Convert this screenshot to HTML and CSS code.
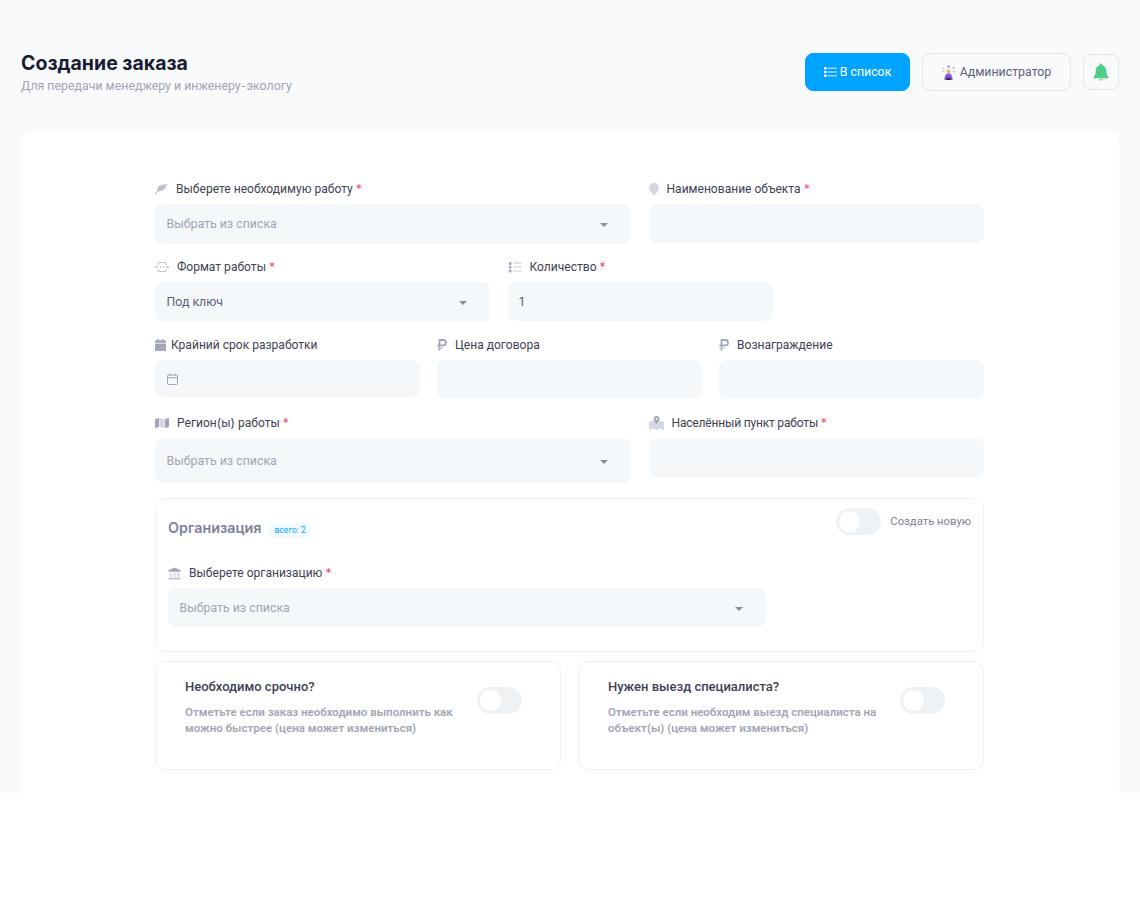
FILE: index.html
```html
<!DOCTYPE html>
<html lang="ru">
  <head>
    <meta charset="UTF-8" />
    <title>Создание заказа</title>
    <link rel="stylesheet" href="styles.css">
  </head>
  <body>
    <div class="page">
      <header class="toolbar">
        <div class="heading">
          <h1>Создание заказа</h1>
          <p>Для передачи менеджеру и инженеру<span class="alt">-</span>экологу</p>
        </div>
        <div class="toolbar-actions">
          <button class="btn btn-primary">
            <svg width="13" height="14" viewBox="0 0 13 14"><g fill="#fff"><rect x="0" y="2" width="2.600" height="2.400" rx=".6"/><rect x="0" y="5.800" width="2.600" height="2.400" rx=".6"/><rect x="0" y="9.600" width="2.600" height="2.400" rx=".6"/></g><g fill="#fff" opacity=".6"><rect x="3.500" y="2.400" width="9.500" height="1.600" rx=".5"/><rect x="3.500" y="6.200" width="9.500" height="1.600" rx=".5"/><rect x="3.500" y="10" width="9.500" height="1.600" rx=".5"/></g></svg>
            В список
          </button>
          <button class="btn btn-user">
            <svg width="15" height="15" viewBox="0 0 15 15"><circle cx="7.500" cy="1.500" r="1.200" fill="#6ea8d8"/><circle cx="2.500" cy="3.500" r="1.100" fill="#e9b7d2"/><circle cx="12.500" cy="3" r="1.100" fill="#b0b4d8"/><rect x="1" y="6" width="2.400" height="1.400" fill="#d6cdf0"/><rect x="11.500" y="6" width="3" height="1.400" fill="#c6d0e8"/><circle cx="7.500" cy="6.200" r="2" fill="#f2b27a"/><path d="M3.400 15c0-4 1.600-6.800 4.100-6.800s4.100 2.800 4.100 6.800z" fill="#8a58cf"/><rect x="5.500" y="12.800" width="4" height="2.200" fill="#2f2a55"/></svg>
            Администратор
          </button>
          <button class="btn btn-bell" aria-label="Уведомления">
            <svg width="16" height="18" viewBox="0 0 16 18"><path d="M8 .6c.7 0 1.200.5 1.200 1.200v.5c2.600.6 4.100 2.800 4.100 5.500 0 3 .7 4.600 2.200 6.200.4.500.1 1.200-.6 1.200H1.100c-.7 0-1-.7-.6-1.200C2 12.400 2.700 10.800 2.700 7.800c0-2.700 1.500-4.900 4.100-5.500v-.5C6.800 1.100 7.300.6 8 .6z" fill="#50cd89"/><rect x="5.800" y="15.800" width="4.400" height="1.800" rx=".9" fill="#50cd89" opacity=".6"/></svg>
          </button>
        </div>
      </header>

      <main class="card">
        <form class="order-form">
          <div class="row">
            <div class="field span-7">
              <label class="field-label">
                <svg class="ico" width="13" height="12" viewBox="0 0 14 12"><path d="M13.500 1C9 .4 4.500 1 3 4.500 2.400 6 2.500 7.400 3 8.400 6.500 9 11 7.500 13.500 1z" fill="#c4c6d2"/><path d="M.6 11.400C2.500 8.200 5 6 8.500 4.200" stroke="#a1a5b7" stroke-width="1" fill="none"/></svg>
                <span>Выберете необходимую работу <em>*</em></span>
              </label>
              <div class="select placeholder">Выбрать из списка</div>
            </div>
            <div class="field span-5">
              <label class="field-label">
                <svg class="ico" width="10" height="14" viewBox="0 0 10 14"><path d="M5 .8c2.700 0 4.800 2 4.800 4.700 0 3-2.600 6.200-4.800 7.900C2.800 11.700.2 8.500.2 5.500.2 2.800 2.300.8 5 .8z" fill="#d5d7e2"/></svg>
                <span>Наименование объекта <em>*</em></span>
              </label>
              <input class="input" type="text">
            </div>
          </div>

          <div class="row">
            <div class="field span-5">
              <label class="field-label">
                <svg class="ico" width="14" height="12" viewBox="0 0 14 12" fill="none" stroke="#c4c6d2" stroke-width="1"><path d="M3 4V1.500h8V4M3 8v2.500h8V8"/><path d="M0 6h3M5 6h1M8 6h1M11 6h3" stroke="#a1a5b7"/></svg>
                <span>Формат работы <em>*</em></span>
              </label>
              <div class="select">Под ключ</div>
            </div>
            <div class="field span-4">
              <label class="field-label">
                <svg class="ico" width="14" height="12" viewBox="0 0 14 12"><g fill="#a1a5b7"><rect x="1" y="1" width="2.400" height="3"/><rect x="1" y="5" width="2.400" height="2.600"/><rect x="1" y="8.800" width="2.400" height="2.600"/></g><g fill="#d5d7e2"><rect x="5" y="1.400" width="8.500" height="1.300"/><rect x="5" y="5.400" width="8.500" height="1.300"/><rect x="5" y="9.400" width="8.500" height="1.300"/></g></svg>
                <span>Количество <em>*</em></span>
              </label>
              <input class="input input-digits" type="text" value="1">
            </div>
          </div>

          <div class="row row-dates">
            <div class="field span-4">
              <label class="field-label label-tight">
                <svg class="ico" width="11" height="12" viewBox="0 0 11 12"><rect x="2.500" y="0" width="1.500" height="2" fill="#a1a5b7"/><rect x="7" y="0" width="1.500" height="2" fill="#a1a5b7"/><rect x="0" y="1.200" width="11" height="2.600" rx=".6" fill="#a1a5b7"/><rect x="0" y="4.400" width="11" height="7.600" rx=".6" fill="#a1a5b7"/></svg>
                <span>Крайний срок разработки</span>
              </label>
              <div class="date-input">
                <svg width="11" height="12" viewBox="0 0 11 12" fill="none" stroke="#a1a5b7" stroke-width="1"><rect x=".5" y="2" width="10" height="9.500" rx="1"/><path d="M.5 4.800h10M3 .5v2.500M8 .5v2.500"/></svg>
              </div>
            </div>
            <div class="field span-4">
              <label class="field-label">
                <svg class="ico" width="10" height="12" viewBox="0 0 10 12" fill="none"><path d="M2.500 11.500V1h3.800a2.700 2.700 0 0 1 0 5.400H.5" stroke="#a1a5b7" stroke-width="1.800"/><path d="M.5 9h5.500" stroke="#c8cad6" stroke-width="1.500"/></svg>
                <span>Цена договора</span>
              </label>
              <input class="input" type="text">
            </div>
            <div class="field span-4">
              <label class="field-label">
                <svg class="ico" width="10" height="12" viewBox="0 0 10 12" fill="none"><path d="M2.500 11.500V1h3.800a2.700 2.700 0 0 1 0 5.400H.5" stroke="#a1a5b7" stroke-width="1.800"/><path d="M.5 9h5.500" stroke="#c8cad6" stroke-width="1.500"/></svg>
                <span>Вознаграждение</span>
              </label>
              <input class="input" type="text">
            </div>
          </div>

          <div class="row row-region">
            <div class="field span-7">
              <label class="field-label">
                <svg class="ico" width="14" height="12" viewBox="0 0 15 12"><path d="M0 2l4.500-1.500v9.500L0 11.500z" fill="#a1a5b7"/><path d="M5.200.5l4.600 1.500v9.500L5.200 10z" fill="#d5d7e2"/><path d="M10.500 2L15 .5V10l-4.500 1.500z" fill="#a1a5b7"/></svg>
                <span>Регион<span class="alt">(</span>ы<span class="alt">)</span> работы <em>*</em></span>
              </label>
              <div class="select select-tall placeholder">Выбрать из списка</div>
            </div>
            <div class="field span-5">
              <label class="field-label">
                <svg class="ico" width="15" height="14" viewBox="0 0 15 14"><path d="M0 6l4-1.500 3.500 1.500L11 4.500 15 6v8l-4-1.500L7.500 14 4 12.500 0 14z" fill="#d5d7e2"/><path d="M7.500 0c1.800 0 3 1.300 3 3 0 1.800-1.700 3.500-3 4.800C6.200 6.500 4.500 4.800 4.500 3c0-1.700 1.200-3 3-3z" fill="#a1a5b7"/><circle cx="7.500" cy="3" r="1" fill="#fff"/></svg>
                <span class="text-narrow">Населённый пункт работы <em>*</em></span>
              </label>
              <input class="input" type="text">
            </div>
          </div>

          <section class="org-box">
            <div class="org-head">
              <div class="org-title">
                <h2>Организация</h2>
                <span class="badge">всего: 2</span>
              </div>
              <div class="switch-wrap">
                <span class="switch"></span>
                <span class="switch-label">Создать новую</span>
              </div>
            </div>
            <div class="row row-last">
              <div class="field span-9">
                <label class="field-label">
                  <svg class="ico" width="13" height="13" viewBox="0 0 14 13"><path d="M7 0l6.500 3v1.500H.5V3z" fill="#a1a5b7"/><g fill="#d5d7e2"><rect x="2" y="5.500" width="2" height="5"/><rect x="6" y="5.500" width="2" height="5"/><rect x="10" y="5.500" width="2" height="5"/></g><rect x=".5" y="11" width="13" height="2" fill="#c4c6d2"/></svg>
                  <span>Выберете организацию <em>*</em></span>
                </label>
                <div class="select select-org placeholder">Выбрать из списка</div>
              </div>
            </div>
          </section>

          <div class="option-grid">
            <div class="option-card">
              <div class="option-text">
                <h3>Необходимо срочно?</h3>
                <p>Отметьте если заказ необходимо выполнить как можно быстрее (цена может измениться)</p>
              </div>
              <span class="switch"></span>
            </div>
            <div class="option-card">
              <div class="option-text">
                <h3>Нужен выезд специалиста?</h3>
                <p>Отметьте если необходим выезд специалиста на объект(ы) (цена может измениться)</p>
              </div>
              <span class="switch"></span>
            </div>
          </div>
        </form>
      </main>
    </div>
  </body>
</html>
```

FILE: styles.css
```css
* {
  box-sizing: border-box;
}
body {
  margin: 0;
  background-color: #fff;
  font-family: Roboto, sans-serif;
  color: #3f4254;
}
.alt {
  font-family: Inter, sans-serif;
}
.page {
  height: 793px;
  overflow: hidden;
  background-color: #f9fafc;
  padding: 53px 21px 0 21px;
}
.toolbar {
  display: flex;
  justify-content: space-between;
  align-items: flex-start;
  margin-bottom: 36px;
}
.heading h1 {
  margin: 0;
  font-family: Inter, sans-serif;
  font-size: 19.5px;
  line-height: 20px;
  font-weight: 700;
  color: #181c32;
}
.heading p {
  margin: 4px 0 0 0;
  font-size: 12.35px;
  line-height: 17px;
  color: #a1a5b7;
}
.toolbar-actions {
  display: flex;
  align-items: center;
  gap: 12px;
}
.btn {
  display: flex;
  align-items: center;
  justify-content: center;
  font-family: Roboto, sans-serif;
  font-size: 12.35px;
  height: 38px;
  border-radius: 8px;
  border: 1px solid #e4e6ef;
  padding: 0;
  background-color: transparent;
}
.btn-primary {
  width: 105px;
  gap: 3px;
  color: #fff;
  background-color: #00a3ff;
  border-color: #00a3ff;
  font-weight: 400;
}
.btn-user {
  width: 149px;
  gap: 4px;
  padding-right: 1px;
  color: #5e6278;
}
.btn-bell {
  width: 36px;
  height: 36px;
}
.card {
  background-color: #fff;
  border-radius: 10px;
  height: 900px;
  padding: 51px 135px 0 134px;
}
.row {
  display: grid;
  grid-template-columns: repeat(12, 1fr);
  column-gap: 17px;
  margin-bottom: 16px;
  align-items: start;
}
.row-dates {
  margin-bottom: 17px;
}
.row-region {
  margin-bottom: 15px;
}
.row-last {
  margin-bottom: 0;
}
.span-4 {
  grid-column: span 4;
}
.span-5 {
  grid-column: span 5;
}
.span-7 {
  grid-column: span 7;
}
.span-9 {
  grid-column: span 9;
}
.field-label {
  display: flex;
  align-items: center;
  gap: 8px;
  height: 14px;
  margin-bottom: 8px;
  font-size: 12.05px;
  line-height: 14px;
  color: #3f4254;
}
.label-tight {
  gap: 5px;
}
.text-narrow {
  letter-spacing: -0.2px;
}
.field-label em {
  font-family: Inter, sans-serif;
  font-style: normal;
  color: #f1416c;
}
.ico {
  flex: none;
}
.select,
.input,
.date-input {
  display: block;
  width: 100%;
  height: 39px;
  border: none;
  outline: none;
  border-radius: 8px;
  background-color: #f5f8fa;
  font-family: Roboto, sans-serif;
  font-size: 12.35px;
  color: #5e6278;
  padding: 0 11.5px;
}
.select {
  display: flex;
  align-items: center;
  position: relative;
  width: calc(100% - 0.6px);
  height: 40px;
}
.select::after {
  content: "";
  position: absolute;
  right: 23px;
  top: 50%;
  margin-top: -1px;
  border-left: 4px solid transparent;
  border-right: 4px solid transparent;
  border-top: 4px solid #8b8e9e;
}
.select-tall {
  height: 45px;
}
.select-org {
  width: 100%;
  height: 39px;
}
.placeholder {
  color: #a1a5b7;
}
.input-digits {
  font-family: Inter, sans-serif;
}
.date-input {
  display: flex;
  align-items: center;
  height: 37px;
}
.org-box {
  border: 1px solid #eff2f5;
  border-radius: 10px;
  padding: 9px 12px 24px 12px;
  height: 154px;
  margin-bottom: 9px;
}
.org-head {
  display: flex;
  justify-content: space-between;
  align-items: flex-start;
  margin-bottom: 28px;
}
.org-title {
  display: flex;
  align-items: flex-start;
  gap: 7px;
  padding-top: 12px;
}
.org-title h2 {
  margin: 0;
  font-family: Inter, sans-serif;
  font-size: 14.3px;
  line-height: 15px;
  font-weight: 600;
  color: #7e8299;
}
.badge {
  margin-top: 3px;
  font-size: 8.6px;
  line-height: 15px;
  padding: 0 6px;
  border-radius: 8px;
  background-color: #f1faff;
  color: #00a3ff;
}
.switch-wrap {
  display: flex;
  align-items: center;
  gap: 9px;
}
.switch-label {
  font-size: 11.3px;
  color: #7e8299;
}
.switch {
  display: block;
  flex: none;
  position: relative;
  width: 45px;
  height: 27px;
  border-radius: 14px;
  background-color: #eff2f5;
}
.switch::after {
  content: "";
  position: absolute;
  left: 3px;
  top: 3px;
  width: 21px;
  height: 21px;
  border-radius: 50%;
  background-color: #fff;
}
.option-grid {
  display: grid;
  grid-template-columns: 1fr 1fr;
  column-gap: 17px;
}
.option-card {
  display: flex;
  align-items: flex-start;
  height: 109px;
  border: 1px solid #eff2f5;
  border-radius: 10px;
  padding: 25px 38px 0 29px;
}
.option-text {
  flex: 1;
  padding-right: 8px;
}
.option-text h3 {
  margin: -8px 0 0 0;
  font-size: 13px;
  line-height: 16px;
  font-weight: 500;
  color: #3f4254;
}
.option-text p {
  margin: 9px 0 0 0;
  font-size: 11.5px;
  line-height: 16px;
  font-weight: 600;
  color: #a1a5b7;
}
```
